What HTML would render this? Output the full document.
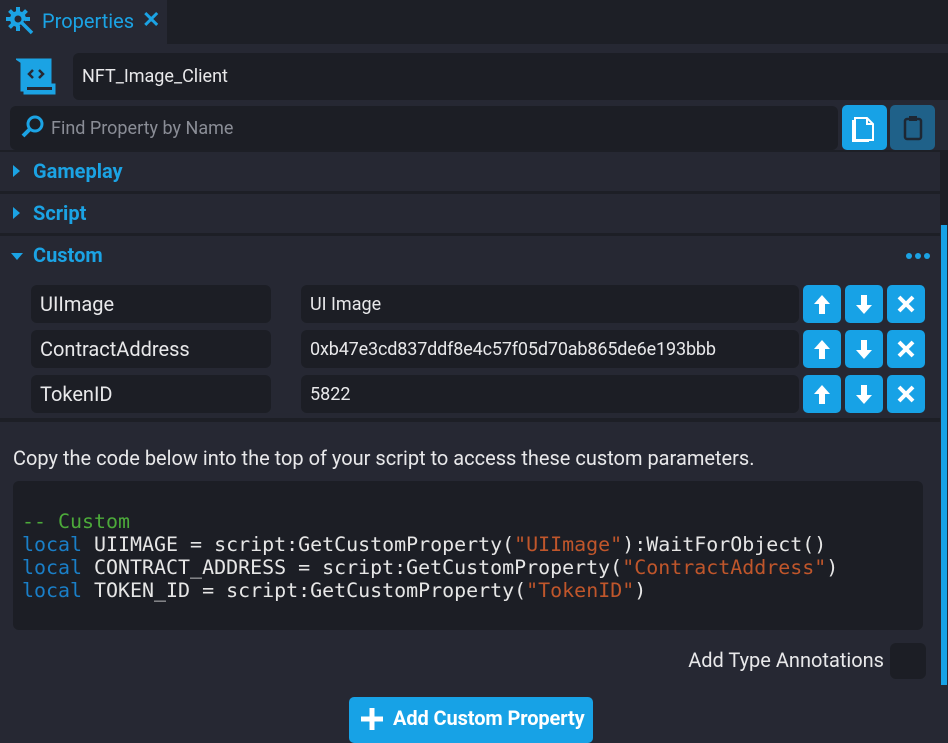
<!DOCTYPE html>
<html><head><meta charset="utf-8"><style>
*{margin:0;padding:0;box-sizing:border-box}
body{width:948px;height:742px;overflow:hidden;background:#262833;font-family:"Roboto","Liberation Sans",sans-serif;color:#e8e8ea;position:relative}
.a{position:absolute}
.f{background:#1c1e25;border-radius:6px}
.t{font-size:18px;line-height:39px;padding-left:9px;white-space:nowrap}
.l{font-size:20px}
.b{background:#17a2e6;border-radius:5px;width:38px;height:38px}
.b svg{display:block}
.hd{font-size:20px;font-weight:bold;color:#1ba3e4}
.code{font-family:"DejaVu Sans Mono","Liberation Mono",monospace;font-size:19.95px;line-height:23px;white-space:pre;color:#e6e6e6}
.k{color:#1a7fc8}.s{color:#c0562b}.c{color:#4caa3a}
</style></head><body>
<div class="a" style="left:0;top:0;width:948px;height:44px;background:#1d1f26"></div>
<div class="a" style="left:0;top:0;width:167px;height:44px;background:#262833"></div>
<svg class="a" style="left:5px;top:6px" width="30" height="30" viewBox="0 0 30 30"><g fill="#1ba3e4"><circle cx="13" cy="13" r="8"/><rect x="11" y="1" width="4" height="24"/><rect x="1" y="11" width="24" height="4"/><rect x="11" y="1" width="4" height="24" transform="rotate(45 13 13)"/><rect x="11" y="1" width="4" height="24" transform="rotate(-45 13 13)"/></g><circle cx="13" cy="13" r="3.5" fill="#262833"/><path d="M17 17 L27 27" stroke="#262833" stroke-width="7"/><path d="M16 16 L27 27" stroke="#1ba3e4" stroke-width="3.5"/></svg>
<div class="a" style="left:42px;top:9px;font-size:20px;color:#1ba3e4">Properties</div>
<div class="a" style="left:142px;top:8px;font-size:22px;font-weight:bold;color:#1ba3e4">✕</div>
<svg class="a" style="left:16px;top:57px" width="40" height="40" viewBox="0 0 40 40"><path d="M3 3 H34 V28 H38 V36 H9 V33 H6 V5 Z" fill="none" stroke="#1ba3e4" stroke-width="3"/><rect x="6" y="3" width="28" height="30" fill="#1ba3e4"/><path d="M17 13 L13 17 L17 21 M23 13 L27 17 L23 21" fill="none" stroke="#262833" stroke-width="2.5"/><rect x="8" y="28" width="30" height="8" fill="#1ba3e4"/><rect x="11" y="30" width="25" height="3" fill="#262833"/></svg>
<div class="a f t" style="left:73px;top:53px;width:880px;height:47px;line-height:48px;font-size:18px">NFT_Image_Client</div>
<div class="a f" style="left:10px;top:106px;width:828px;height:44px"></div>
<svg class="a" style="left:20px;top:114px" width="26" height="26" viewBox="0 0 26 26"><circle cx="15" cy="10" r="7" fill="none" stroke="#1ba3e4" stroke-width="3"/><path d="M10 15 L3 22" stroke="#1ba3e4" stroke-width="4"/></svg>
<div class="a" style="left:51px;top:118px;font-size:18px;color:#8a8d96">Find Property by Name</div>
<div class="a" style="left:842px;top:105px;width:45px;height:45px;background:#17a2e6;border-radius:5px"></div>
<svg class="a" style="left:852px;top:114px" width="24" height="28" viewBox="0 0 24 28"><path d="M3 4 H15 L21 10 V26 H3 Z" fill="none" stroke="#fff" stroke-width="2"/><path d="M1 6 V27 H17" fill="none" stroke="#fff" stroke-width="2"/><path d="M15 4 V10 H21" fill="none" stroke="#fff" stroke-width="2"/></svg>
<div class="a" style="left:890px;top:105px;width:45px;height:45px;background:#1f6189;border-radius:5px"></div>
<svg class="a" style="left:902px;top:115px" width="22" height="26" viewBox="0 0 22 26"><rect x="3" y="4" width="16" height="20" rx="2" fill="none" stroke="#1d2733" stroke-width="2.5"/><rect x="7" y="1" width="8" height="5" fill="#1d2733"/></svg>
<div class="a" style="left:0;top:150px;width:940px;height:2px;background:#1d1f26"></div>
<div class="a" style="left:0;top:191px;width:940px;height:3px;background:#1d1f26"></div>
<div class="a" style="left:0;top:233px;width:940px;height:3px;background:#1d1f26"></div>
<div class="a" style="left:0;top:418px;width:940px;height:4px;background:#1d1f26"></div>
<div class="a" style="left:940px;top:150px;width:8px;height:75px;background:#1d1f26"></div>
<div class="a" style="left:941px;top:225px;width:6px;height:460px;background:#17a2e6"></div>
<div class="a" style="left:13px;top:165px;width:0;height:0;border-left:7px solid #1ba3e4;border-top:6px solid transparent;border-bottom:6px solid transparent"></div>
<div class="a hd" style="left:33px;top:159px">Gameplay</div>
<div class="a" style="left:13px;top:207px;width:0;height:0;border-left:7px solid #1ba3e4;border-top:6px solid transparent;border-bottom:6px solid transparent"></div>
<div class="a hd" style="left:33px;top:201px">Script</div>
<div class="a" style="left:11px;top:253px;width:0;height:0;border-top:7px solid #1ba3e4;border-left:6px solid transparent;border-right:6px solid transparent"></div>
<div class="a hd" style="left:33px;top:243px">Custom</div>
<svg class="a" style="left:904px;top:250px" width="28" height="12"><circle cx="5" cy="6" r="3" fill="#1ba3e4"/><circle cx="14" cy="6" r="3" fill="#1ba3e4"/><circle cx="23" cy="6" r="3" fill="#1ba3e4"/></svg>

<div class="a f t l" style="left:31px;top:285px;width:240px;height:38px">UIImage</div>
<div class="a f t" style="left:301px;top:285px;width:498px;height:38px">UI Image</div>
<div class="a f t l" style="left:31px;top:330px;width:240px;height:38px">ContractAddress</div>
<div class="a f t" style="left:301px;top:330px;width:498px;height:38px;letter-spacing:-.15px">0xb47e3cd837ddf8e4c57f05d70ab865de6e193bbb</div>
<div class="a f t l" style="left:31px;top:375px;width:240px;height:38px">TokenID</div>
<div class="a f t" style="left:301px;top:375px;width:498px;height:38px">5822</div>

<div class="a" style="left:803px;top:285px">
<div class="a b" style="left:0;top:0"><svg width="38" height="38"><path d="M19 10 L11 19 H16 V29 H22 V19 H27 Z" fill="#fff"/></svg></div>
<div class="a b" style="left:42px;top:0"><svg width="38" height="38"><path d="M19 29 L11 20 H16 V10 H22 V20 H27 Z" fill="#fff"/></svg></div>
<div class="a b" style="left:84px;top:0"><svg width="38" height="38"><path d="M12 12 L26 26 M26 12 L12 26" stroke="#fff" stroke-width="4"/></svg></div>
<div class="a b" style="left:0;top:45px"><svg width="38" height="38"><path d="M19 10 L11 19 H16 V29 H22 V19 H27 Z" fill="#fff"/></svg></div>
<div class="a b" style="left:42px;top:45px"><svg width="38" height="38"><path d="M19 29 L11 20 H16 V10 H22 V20 H27 Z" fill="#fff"/></svg></div>
<div class="a b" style="left:84px;top:45px"><svg width="38" height="38"><path d="M12 12 L26 26 M26 12 L12 26" stroke="#fff" stroke-width="4"/></svg></div>
<div class="a b" style="left:0;top:90px"><svg width="38" height="38"><path d="M19 10 L11 19 H16 V29 H22 V19 H27 Z" fill="#fff"/></svg></div>
<div class="a b" style="left:42px;top:90px"><svg width="38" height="38"><path d="M19 29 L11 20 H16 V10 H22 V20 H27 Z" fill="#fff"/></svg></div>
<div class="a b" style="left:84px;top:90px"><svg width="38" height="38"><path d="M12 12 L26 26 M26 12 L12 26" stroke="#fff" stroke-width="4"/></svg></div>
</div>

<div class="a" style="left:13px;top:446px;font-size:20px;white-space:nowrap">Copy the code below into the top of your script to access these custom parameters.</div>
<div class="a f" style="left:13px;top:481px;width:910px;height:149px"></div>
<div class="a code" style="left:22px;top:510px"><span class="c">-- Custom</span>
<span class="k">local</span> UIIMAGE = script:GetCustomProperty(<span class="s">"UIImage"</span>):WaitForObject()
<span class="k">local</span> CONTRACT_ADDRESS = script:GetCustomProperty(<span class="s">"ContractAddress"</span>)
<span class="k">local</span> TOKEN_ID = script:GetCustomProperty(<span class="s">"TokenID"</span>)</div>
<div class="a" style="right:64px;top:648px;font-size:20px">Add Type Annotations</div>
<div class="a f" style="left:890px;top:643px;width:36px;height:36px"></div>
<div class="a" style="left:349px;top:697px;width:244px;height:46px;background:#17a2e6;border-radius:5px"></div>
<svg class="a" style="left:359px;top:706px" width="26" height="26"><path d="M13 2 V24 M2 13 H24" stroke="#fff" stroke-width="5"/></svg>
<div class="a" style="left:393px;top:706px;font-size:20px;font-weight:bold;color:#fff;letter-spacing:-.1px">Add Custom Property</div>
</body></html>
